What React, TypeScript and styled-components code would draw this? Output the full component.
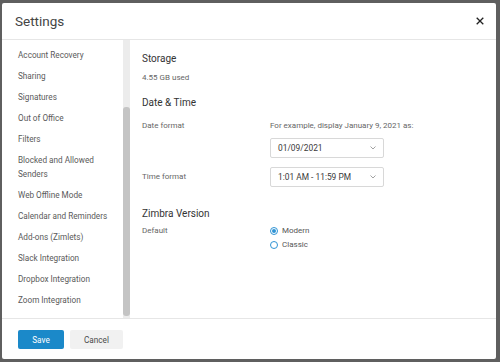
import React from "react";
import { styled, createGlobalStyle } from "styled-components";

const GlobalStyle = createGlobalStyle`
    html, body {
        margin: 0;
        padding: 0;
        background: #5f5f5f;
        font-family: Roboto, "Liberation Sans", sans-serif;
    }
`;

const Page = styled.div`
    width: 500px;
    height: 362px;
    padding: 3px 4px 3px 2px;
    box-sizing: border-box;
`;

const Modal = styled.div`
    height: 356px;
    background: #ffffff;
    border-radius: 2px;
    display: flex;
    flex-direction: column;
    overflow: hidden;
`;

const Header = styled.div`
    height: 36px;
    display: flex;
    align-items: center;
    justify-content: space-between;
    padding: 0 10px 0 13px;
    border-bottom: 1px solid #e6e6e6;
`;

const Title = styled.h1`
    margin: 0;
    font-size: 13.5px;
    font-weight: 400;
    color: #444444;
`;

const CloseButton = styled.button`
    border: 0;
    background: none;
    padding: 0;
    width: 12px;
    height: 12px;
    display: flex;
    align-items: center;
    justify-content: center;
    cursor: pointer;
`;

const Body = styled.div`
    flex: 1;
    display: flex;
    min-height: 0;
`;

const Sidebar = styled.nav`
    width: 121px;
    overflow: hidden;
    padding-top: 4px;
`;

const NavItem = styled.div`
    padding: 3.5px 8px 3.5px 16px;
    font-size: 8.2px;
    line-height: 14px;
    color: #5a5a5a;
`;

const ScrollTrack = styled.div`
    width: 7px;
    background: #ececec;
    display: flex;
    flex-direction: column;
    padding-top: 67px;
    padding-bottom: 2px;
    box-sizing: border-box;
`;

const ScrollThumb = styled.div`
    flex: 1;
    background: #c4c4c4;
    border-radius: 3px;
`;

const Content = styled.div`
    flex: 1;
    padding: 11px 12px;
`;

const SectionTitle = styled.h2<{ $gap: number }>`
    margin: ${(p) => p.$gap}px 0 0;
    font-size: 10px;
    font-weight: 400;
    line-height: 16px;
    color: #333333;
`;

const Text = styled.div`
    font-size: 8px;
    line-height: 12px;
    color: #666666;
`;

const Note = styled(Text)`
    margin-top: 5px;
`;

const Row = styled.div<{ $gap: number; $center?: boolean }>`
    display: grid;
    grid-template-columns: 128px 1fr;
    align-items: ${(p) => (p.$center ? "center" : "start")};
    margin-top: ${(p) => p.$gap}px;
`;

const Field = styled.div`
    display: flex;
    flex-direction: column;
    gap: 6px;
`;

const Select = styled.div`
    width: 114px;
    height: 20px;
    box-sizing: border-box;
    border: 1px solid #d8d8d8;
    border-radius: 2px;
    display: flex;
    align-items: center;
    justify-content: space-between;
    padding: 0 7px 0 7px;
    font-size: 8.4px;
    color: #3a3a3a;
`;

const Radios = styled.div`
    display: flex;
    flex-direction: column;
    gap: 2px;
`;

const RadioRow = styled.label`
    display: flex;
    align-items: center;
    gap: 4px;
    font-size: 8px;
    line-height: 12px;
    color: #555555;
`;

const RadioDot = styled.span<{ $checked?: boolean }>`
    width: 8px;
    height: 8px;
    box-sizing: border-box;
    border-radius: 50%;
    border: 1px solid #2f93d4;
    display: flex;
    align-items: center;
    justify-content: center;

    &::after {
        content: "";
        width: 4px;
        height: 4px;
        border-radius: 50%;
        background: ${(p) => (p.$checked ? "#2f93d4" : "transparent")};
    }
`;

const Footer = styled.div`
    flex: 0 0 auto;
    border-top: 1px solid #e6e6e6;
    padding: 11px 16px 10px;
    display: flex;
    gap: 6px;
`;

const Button = styled.button<{ $primary?: boolean }>`
    height: 19px;
    border: 0;
    border-radius: 2px;
    padding: 0;
    width: ${(p) => (p.$primary ? 46 : 53)}px;
    background: ${(p) => (p.$primary ? "#1b89c9" : "#f1f1f1")};
    color: ${(p) => (p.$primary ? "#ffffff" : "#4a4a4a")};
    font-family: Roboto, "Liberation Sans", sans-serif;
    font-size: 8.2px;
`;

const navItems = [
    "Account Recovery",
    "Sharing",
    "Signatures",
    "Out of Office",
    "Filters",
    "Blocked and Allowed Senders",
    "Web Offline Mode",
    "Calendar and Reminders",
    "Add-ons (Zimlets)",
    "Slack Integration",
    "Dropbox Integration",
    "Zoom Integration",
];

function Chevron() {
    return (
        <svg width="6" height="4" viewBox="0 0 6 4">
            <polyline points="0.5,0.5 3,3 5.5,0.5" fill="none" stroke="#8a8a8a" strokeWidth="0.8" />
        </svg>
    );
}

export default function App() {
    return (
        <Page>
            <GlobalStyle />
            <Modal>
                <Header>
                    <Title>Settings</Title>
                    <CloseButton aria-label="Close">
                        <svg width="8" height="8" viewBox="0 0 8 8">
                            <path d="M0.7 0.7 L7.3 7.3 M7.3 0.7 L0.7 7.3" stroke="#222" strokeWidth="1.3" />
                        </svg>
                    </CloseButton>
                </Header>

                <Body>
                    <Sidebar>
                        {navItems.map((item) => (
                            <NavItem key={item}>{item}</NavItem>
                        ))}
                    </Sidebar>
                    <ScrollTrack>
                        <ScrollThumb />
                    </ScrollTrack>

                    <Content>
                        <SectionTitle $gap={0}>Storage</SectionTitle>
                        <Note>4.55 GB used</Note>

                        <SectionTitle $gap={11}>Date &amp; Time</SectionTitle>
                        <Row $gap={9}>
                            <Text>Date format</Text>
                            <Field>
                                <Text>For example, display January 9, 2021 as:</Text>
                                <Select>
                                    01/09/2021
                                    <Chevron />
                                </Select>
                            </Field>
                        </Row>
                        <Row $gap={9} $center>
                            <Text>Time format</Text>
                            <Select>
                                1:01 AM - 11:59 PM
                                <Chevron />
                            </Select>
                        </Row>

                        <SectionTitle $gap={19}>Zimbra Version</SectionTitle>
                        <Row $gap={3}>
                            <Text>Default</Text>
                            <Radios>
                                <RadioRow>
                                    <RadioDot $checked />
                                    Modern
                                </RadioRow>
                                <RadioRow>
                                    <RadioDot />
                                    Classic
                                </RadioRow>
                            </Radios>
                        </Row>
                    </Content>
                </Body>

                <Footer>
                    <Button $primary>Save</Button>
                    <Button>Cancel</Button>
                </Footer>
            </Modal>
        </Page>
    );
}
